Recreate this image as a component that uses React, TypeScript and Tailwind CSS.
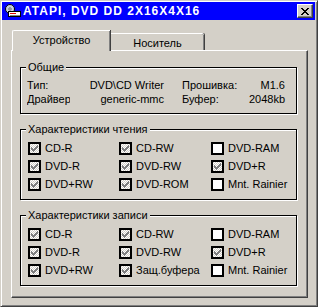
import React from 'react';

const FACE = '#d4d0c8';

type Cap = { label: string; checked: boolean };

const readCaps: Cap[] = [
  { label: 'CD-R', checked: true },
  { label: 'CD-RW', checked: true },
  { label: 'DVD-RAM', checked: false },
  { label: 'DVD-R', checked: true },
  { label: 'DVD-RW', checked: true },
  { label: 'DVD+R', checked: true },
  { label: 'DVD+RW', checked: true },
  { label: 'DVD-ROM', checked: true },
  { label: 'Mnt. Rainier', checked: false },
];

const writeCaps: Cap[] = [
  { label: 'CD-R', checked: true },
  { label: 'CD-RW', checked: true },
  { label: 'DVD-RAM', checked: false },
  { label: 'DVD-R', checked: true },
  { label: 'DVD-RW', checked: true },
  { label: 'DVD+R', checked: true },
  { label: 'DVD+RW', checked: true },
  { label: 'Защ.буфера', checked: true },
  { label: 'Mnt. Rainier', checked: false },
];

// classic 7x7 check glyph
const CHECK = [
  '......x',
  '.....xx',
  'x...xxx',
  'xx.xxx.',
  'xxxxx..',
  '.xxx...',
  '..x....',
];

// classic close-button cross, 8x7
const CROSS = [
  'xx....xx',
  '.xx..xx.',
  '..xxxx..',
  '...xx...',
  '..xxxx..',
  '.xx..xx.',
  'xx....xx',
];

function Pixels({ rows, color, dx, dy }: { rows: string[]; color: string; dx: number; dy: number }) {
  return (
    <>
      {rows.flatMap((row, y) =>
        row.split('').map((c, x) =>
          c === 'x' ? <rect key={`${x}-${y}`} x={dx + x} y={dy + y} width={1} height={1} fill={color} /> : null
        )
      )}
    </>
  );
}

function CheckBox({ checked }: { checked: boolean }) {
  return (
    <svg width={13} height={13} shapeRendering="crispEdges" className="shrink-0">
      <defs>
        <pattern id="dither" width={2} height={2} patternUnits="userSpaceOnUse">
          <rect width={2} height={2} fill="#ffffff" />
          <rect width={1} height={1} fill={FACE} />
          <rect x={1} y={1} width={1} height={1} fill={FACE} />
        </pattern>
      </defs>
      <rect width={13} height={13} fill="#000" />
      <rect x={2} y={2} width={9} height={9} fill={checked ? 'url(#dither)' : '#fff'} />
      {checked && <Pixels rows={CHECK} color="#808080" dx={3} dy={3} />}
    </svg>
  );
}

function DriveIcon() {
  return (
    <svg width={16} height={16} viewBox="0 0 16 16" shapeRendering="crispEdges" className="shrink-0">
      <circle cx={5} cy={6} r={4.5} fill="#c8d0e0" stroke="#000" strokeWidth={1} shapeRendering="auto" />
      <circle cx={5} cy={6} r={1.2} fill="#fff" stroke="#404040" strokeWidth={0.8} shapeRendering="auto" />
      <rect x={3.5} y={8.5} width={12} height={5} fill="#fff" stroke="#000" />
      <rect x={5} y={10} width={6} height={1} fill="#e00000" />
      <rect x={5} y={12} width={10} height={1} fill="#808080" />
    </svg>
  );
}

function Group({ title, className, children }: { title: string; className: string; children: React.ReactNode }) {
  return (
    <div className={`relative w-[277px] border border-black shadow-[1px_1px_0_#fff,inset_1px_1px_0_#fff] ${className}`}>
      <span className="absolute left-[5px] top-[-8px] bg-[#d4d0c8] px-[2px] leading-[14px]">{title}</span>
      {children}
    </div>
  );
}

function CapsGrid({ caps }: { caps: Cap[] }) {
  return (
    <div className="grid grid-cols-[91px_92px_1fr] pl-[7px]">
      {caps.map((c, i) => (
        <div key={i} className="flex h-[18px] items-center gap-[4px] whitespace-nowrap">
          <CheckBox checked={c.checked} />
          <span className="leading-[13px]">{c.label}</span>
        </div>
      ))}
    </div>
  );
}

export default function App() {
  return (
    <div className="w-[318px] h-[307px] overflow-hidden bg-[#d4d0c8] border border-t-[#d4d0c8] border-l-[#d4d0c8] border-r-[#404040] border-b-[#404040] shadow-[inset_1px_1px_0_#fff,inset_-1px_-1px_0_#808080] pl-px pt-px pr-[2px] font-['Liberation_Sans',Arial,sans-serif] text-[11px] text-black">
      {/* Title bar */}
      <div className="flex h-[18px] items-center bg-[#0000ff] pl-[3px] pr-[2px]">
        <DriveIcon />
        <span className="ml-[2px] text-[12px] font-bold tracking-[1px] text-white">ATAPI, DVD DD 2X16X4X16</span>
        <button className="ml-auto flex h-[14px] w-[16px] items-center justify-center border border-t-white border-l-white border-r-[#404040] border-b-[#404040] bg-[#d4d0c8] shadow-[inset_-1px_-1px_0_#808080]">
          <svg width={8} height={7} shapeRendering="crispEdges">
            <Pixels rows={CROSS} color="#000" dx={0} dy={0} />
          </svg>
        </button>
      </div>

      {/* Tabs */}
      <div className="ml-[10px] mt-[10px] flex h-[20px] items-end">
        <div className="relative z-10 mb-[-1px] flex h-[21px] w-[98px] items-center justify-center rounded-tl-[2px] border-l border-t border-white bg-[#d4d0c8] pb-px shadow-[inset_-1px_0_0_#808080,1px_0_0_#404040]">
          Устройство
        </div>
        <div className="ml-px flex h-[17px] w-[93px] items-center justify-center rounded-tr-[2px] border-t border-white bg-[#d4d0c8] pt-[2px] shadow-[inset_-1px_0_0_#808080,1px_0_0_#404040]">
          Носитель
        </div>
      </div>

      {/* Panel */}
      <div className="ml-[9px] h-[248px] w-[297px] border border-t-white border-l-white border-r-[#404040] border-b-[#404040] pl-[8px] pt-[16px] shadow-[inset_-1px_-1px_0_#808080]">
        <Group title="Общие" className="h-[47px] pt-[10px]">
          <div className="grid grid-cols-[137px_103px] gap-x-[18px] pl-[6px]">
            <div className="flex h-[14px] items-center whitespace-nowrap">
              <span>Тип:</span>
              <span className="ml-auto">DVD\CD Writer</span>
            </div>
            <div className="flex h-[14px] items-center whitespace-nowrap">
              <span>Прошивка:</span>
              <span className="ml-auto">M1.6</span>
            </div>
            <div className="flex h-[14px] items-center whitespace-nowrap">
              <span className="w-[43px] overflow-hidden">Драйвер</span>
              <span className="ml-auto">generic-mmc</span>
            </div>
            <div className="flex h-[14px] items-center whitespace-nowrap">
              <span>Буфер:</span>
              <span className="ml-auto">2048kb</span>
            </div>
          </div>
        </Group>

        <Group title="Характеристики чтения" className="mt-[15px] h-[71px] pt-[9px]">
          <CapsGrid caps={readCaps} />
        </Group>

        <Group title="Характеристики записи" className="mt-[15px] h-[71px] pt-[9px]">
          <CapsGrid caps={writeCaps} />
        </Group>
      </div>
    </div>
  );
}
